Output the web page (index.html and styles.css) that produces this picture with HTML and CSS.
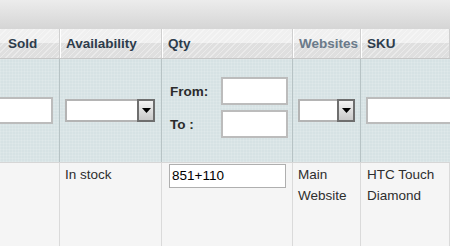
FILE: index.html
```
<!DOCTYPE html>
<html lang="en">
<head>
    <meta charset="UTF-8">
    <title>Products Grid</title>
    <link rel="stylesheet" href="styles.css">
</head>
<body>
    <div class="toolbar"></div>

    <div class="grid">
        <!-- Headings -->
        <div class="row head">
            <div class="cell">Sold</div>
            <div class="cell">Availability</div>
            <div class="cell">Qty</div>
            <div class="cell muted">Websites</div>
            <div class="cell">SKU</div>
        </div>

        <!-- Filters -->
        <div class="row filter">
            <div class="cell"><div class="text-input sold-input"></div></div>
            <div class="cell">
                <div class="select wide">
                    <span class="select-btn"><svg width="9" height="6" viewBox="0 0 9 6"><path d="M0 0h9L4.5 5z" fill="#000"/></svg></span>
                </div>
            </div>
            <div class="cell qty-cell">
                <div class="range">
                    <span class="range-label">From:</span>
                    <div class="text-input range-input"></div>
                    <span class="range-label">To :</span>
                    <div class="text-input range-input"></div>
                </div>
            </div>
            <div class="cell">
                <div class="select narrow">
                    <span class="select-btn"><svg width="9" height="6" viewBox="0 0 9 6"><path d="M0 0h9L4.5 5z" fill="#000"/></svg></span>
                </div>
            </div>
            <div class="cell"><div class="text-input sku-input"></div></div>
        </div>

        <!-- Data -->
        <div class="row data">
            <div class="cell"></div>
            <div class="cell">In stock</div>
            <div class="cell"><div class="qty-input">851+110</div></div>
            <div class="cell">Main<br>Website</div>
            <div class="cell">HTC Touch<br>Diamond</div>
        </div>
    </div>
</body>
</html>
```

FILE: styles.css
```
/* Basic Reset */
html, body {
    margin: 0;
    padding: 0;
    font-family: 'Liberation Sans', Arial, sans-serif;
    overflow: hidden;
    background: #f5f5f5;
}

/* Top bar */
.toolbar {
    height: 29px;
    background: linear-gradient(#ececec, #d5d5d5);
}

/* Grid rows */
.row {
    display: grid;
    grid-template-columns: 60px 102px 131px 68px 1fr;
}

.cell {
    box-sizing: border-box;
}

/* Headings */
.head {
    height: 29px;
    border-bottom: 1px solid #c6c6c6;
    background:
        repeating-linear-gradient(135deg, rgba(255, 255, 255, 0.35) 0 1px, transparent 1px 4px),
        linear-gradient(#f0f0f0 50%, #dfdfdf 50%);
}

.head .cell {
    display: flex;
    align-items: center;
    padding-left: 6px;
    font-size: 13.5px;
    font-weight: bold;
    color: #2d3c4c;
    border-right: 1px solid #cfcfcf;
    box-shadow: inset 1px 0 #ffffff;
}

.head .cell:first-child {
    padding-left: 8px;
    box-shadow: none;
}

.head .muted {
    color: #6a7a8a;
}

/* Filters */
.filter {
    height: 103px;
    background-color: #d6e2e4;
    background-image:
        repeating-linear-gradient(0deg, rgba(255, 255, 255, 0.12) 0 1px, transparent 1px 3px),
        repeating-linear-gradient(90deg, rgba(255, 255, 255, 0.12) 0 1px, transparent 1px 3px);
}

.filter .cell {
    display: flex;
    align-items: center;
    padding-left: 5px;
    border-right: 1px solid #b7c3c5;
}

.text-input {
    box-sizing: border-box;
    height: 27px;
    background: #ffffff;
    border: 2px solid #bcbcbc;
}

.sold-input {
    width: 74px;
    margin-left: -26px;
}

.sku-input {
    width: 100px;
}

.select {
    box-sizing: border-box;
    display: flex;
    justify-content: flex-end;
    height: 23px;
    background: #ffffff;
    border: 2px solid #b4b4b4;
}

.select.wide {
    width: 90px;
}

.select.narrow {
    width: 57px;
}

.select-btn {
    box-sizing: border-box;
    display: flex;
    align-items: center;
    justify-content: center;
    width: 18px;
    margin: -2px -2px -2px 0;
    border: 2px solid #6e6e6e;
    background: linear-gradient(#f2f2f2, #c9c9c9);
}

.qty-cell {
    padding-left: 8px !important;
}

.range {
    display: grid;
    grid-template-columns: 51px 67px;
    row-gap: 5px;
    align-items: center;
    margin-top: -6px;
}

.range-label {
    font-size: 13.5px;
    font-weight: bold;
    color: #2b2b2b;
}

.range-input {
    height: 28px;
}

/* Data */
.data {
    height: 90px;
    background: #f5f5f5;
    border-top: 1px solid #d6d6d6;
}

.data .cell {
    padding: 1px 0 0 5px;
    font-size: 13.5px;
    line-height: 21px;
    color: #2e2e2e;
    border-right: 1px solid #dadada;
}

.data .cell:nth-child(3) {
    padding: 1px 0 0 7px;
}

.data .cell:nth-child(5) {
    padding-left: 6px;
}

.qty-input {
    box-sizing: border-box;
    width: 117px;
    height: 24px;
    padding-left: 2px;
    line-height: 22px;
    background: #ffffff;
    border: 1px solid #afafaf;
    color: #000000;
}
```
